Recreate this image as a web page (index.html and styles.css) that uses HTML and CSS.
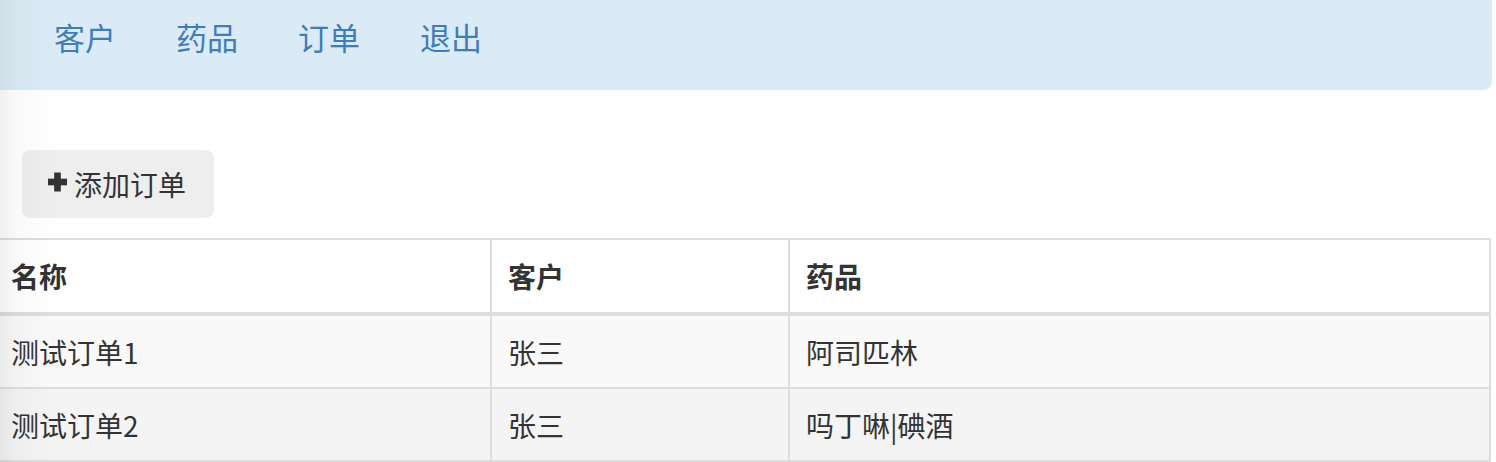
FILE: index.html
```html
<!DOCTYPE html>
<html lang="zh-CN">
<head>
<meta charset="utf-8">
<title>订单</title>
<link rel="stylesheet" href="styles.css">
</head>
<body>
<div class="page">
  <nav class="navbar">
    <ul class="nav">
      <li><a href="#">客户</a></li>
      <li><a href="#">药品</a></li>
      <li><a href="#">订单</a></li>
      <li><a href="#">退出</a></li>
    </ul>
  </nav>
  <div class="toolbar">
    <button class="btn" type="button"><svg class="plus" viewBox="0 0 20 20" width="20" height="20"><rect x="6.5" y="0" width="7" height="20"/><rect x="0" y="6.5" width="20" height="7"/></svg>添加订单</button>
  </div>
  <table class="grid">
    <thead>
      <tr><th class="c1">名称</th><th class="c2">客户</th><th class="c3">药品</th></tr>
    </thead>
    <tbody>
      <tr class="odd"><td>测试订单1</td><td>张三</td><td>阿司匹林</td></tr>
      <tr class="even"><td>测试订单2</td><td>张三</td><td>吗丁啉|碘酒</td></tr>
    </tbody>
  </table>
  <div class="edge-shadow"></div>
</div>
</body>
</html>
```

FILE: styles.css
```css
html, body {
  margin: 0;
  padding: 0;
  background: #ffffff;
}
body {
  font-family: "Noto Sans CJK SC", "Noto Sans", sans-serif;
  color: #333333;
  overflow: hidden;
}
.page {
  position: relative;
  width: 1492px;
  height: 462px;
  overflow: hidden;
}
.navbar {
  height: 90px;
  background: #dbebf5;
  border-radius: 0 0 8px 0;
}
.nav {
  list-style: none;
  margin: 0;
  padding: 16px 0 0 54px;
  display: flex;
  gap: 60px;
}
.nav a {
  display: block;
  font-size: 31px;
  line-height: 42px;
  color: #3f7cbc;
  text-decoration: none;
}
.toolbar {
  padding: 60px 0 20px 22px;
}
.btn {
  display: flex;
  align-items: center;
  height: 68px;
  width: 192px;
  padding: 0 0 0 26px;
  border: 0;
  border-radius: 8px;
  background: #eeeeee;
  font-family: inherit;
  font-size: 28px;
  color: #333333;
  box-sizing: border-box;
}
.plus {
  display: block;
  width: 19px;
  height: 20px;
  fill: #333333;
  margin: 0 7px 4px 0;
  flex: none;
}
.grid {
  border-collapse: separate;
  border-spacing: 0;
  width: 1491px;
  table-layout: fixed;
  border-top: 2px solid #dddddd;
  font-size: 28px;
}
.grid th, .grid td {
  box-sizing: border-box;
  text-align: left;
  padding: 0 16px;
  border-right: 2px solid #dddddd;
  border-bottom: 2px solid #dddddd;
  white-space: nowrap;
}
.grid th:first-child, .grid td:first-child {
  padding-left: 11px;
}
.grid th {
  height: 76px;
  border-bottom-width: 4px;
  font-weight: 700;
  background: #ffffff;
}
.grid td {
  height: 73px;
}
.c1 { width: 492px; }
.c2 { width: 298px; }
.c3 { width: 701px; }
.odd td { background: #f9f9f9; }
.even td { background: #f4f4f4; }
.edge-shadow {
  position: absolute;
  left: 0;
  top: 0;
  bottom: 0;
  width: 55px;
  pointer-events: none;
  background: linear-gradient(to right, rgba(0, 0, 0, 0.06), rgba(0, 0, 0, 0.025) 16px, rgba(0, 0, 0, 0) 55px);
}
```
